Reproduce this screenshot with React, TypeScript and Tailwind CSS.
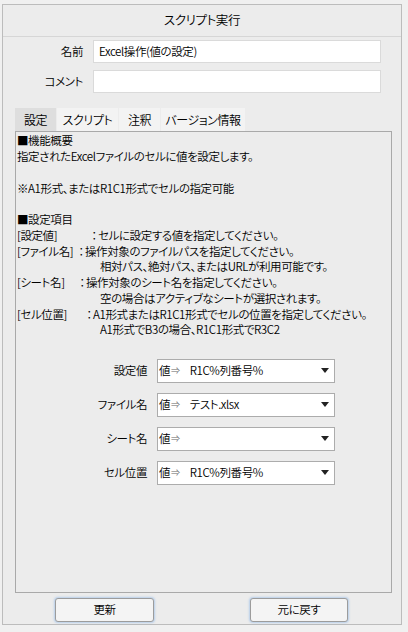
import { ReactNode } from "react";

const FONT = "font-['Noto_Sans_CJK_JP',sans-serif] [font-feature-settings:'palt'] font-[350]";

const TABS = [
  { label: "設定", width: "w-[41px]", active: true },
  { label: "スクリプト", width: "w-[61px]", active: false },
  { label: "注釈", width: "w-[41px]", active: false },
  { label: "バージョン情報", width: "w-[84px]", active: false },
];

const FIELDS = [
  { label: "設定値", value: "R1C%列番号%" },
  { label: "ファイル名", value: "テスト.xlsx" },
  { label: "シート名", value: "" },
  { label: "セル位置", value: "R1C%列番号%" },
];

function Line({ children }: { children?: ReactNode }) {
  return <div className="h-[15.75px] whitespace-pre flex items-center">{children}</div>;
}

// label + colon + description, label column width varies like the original
function Item({ label, labelW, text }: { label: string; labelW: string; text: string }) {
  return (
    <Line>
      <span className={`${labelW} shrink-0`}>{label}</span>
      <span className="w-[8px] shrink-0 text-center">：</span>
      <span>{text}</span>
    </Line>
  );
}

function Cont({ text }: { text: string }) {
  return (
    <Line>
      <span className="ml-[83px]">{text}</span>
    </Line>
  );
}

function Dropdown({ value }: { value: string }) {
  return (
    <div className="flex items-center w-[178px] h-[24px] border border-[#acacac] bg-white">
      <span className="ml-[1px]">値</span>
      <span className="text-[9px] text-[#666] ml-[1px]">⇒</span>
      <span className="ml-[10px] flex-1">{value}</span>
      <svg width="8" height="5" viewBox="0 0 8 5" className="mr-[5px]">
        <path d="M0 0H8L4 5Z" fill="#222" />
      </svg>
    </div>
  );
}

function PushButton({ label, width }: { label: string; width: string }) {
  return (
    <button
      className={`${width} h-[24px] rounded-[3px] border border-[#9c9c9c] bg-[#f4f4f4] shadow-[0_0_2px_1px_rgba(120,170,230,0.45)]`}
    >
      {label}
    </button>
  );
}

export default function App() {
  return (
    <div
      className={`w-[408px] h-[632px] bg-[#f0f0f0] pt-[4px] pl-[2px] text-[11.5px] tracking-[-0.4px] text-black ${FONT}`}
    >
      <div className="w-[400px] h-[621px] border border-[#bcbcbc] bg-[#ececec] flex flex-col">
        {/* Title */}
        <div className="h-[32px] border-b border-[#d6d6d6] flex items-center justify-center text-[12.5px]">
          スクリプト実行
        </div>

        {/* Name / comment */}
        <div className="mt-[3px] flex flex-col gap-[7px]">
          <div className="flex items-center">
            <span className="w-[80px] text-right">名前</span>
            <div className="ml-[10px] w-[288px] h-[23px] bg-white border border-[#dadada] flex items-center pl-[5px]">
              Excel操作(値の設定)
            </div>
          </div>
          <div className="flex items-center">
            <span className="w-[80px] text-right">コメント</span>
            <div className="ml-[10px] w-[288px] h-[23px] bg-white border border-[#dadada]" />
          </div>
        </div>

        {/* Tabs */}
        <div className="mt-[15px] ml-[12px] flex gap-[1px] h-[23px] text-[12px]">
          {TABS.map((t) => (
            <div
              key={t.label}
              className={`${t.width} flex items-center justify-center ${t.active ? "bg-[#dedede]" : "bg-[#f3f3f3]"}`}
            >
              {t.label}
            </div>
          ))}
        </div>

        {/* Tab content */}
        <div className="ml-[12px] w-[377px] h-[462px] border border-[#a9a9a9] pl-[1px] pt-[1px] flex flex-col">
          <Line>■機能概要</Line>
          <Line>指定されたExcelファイルのセルに値を設定します。</Line>
          <Line />
          <Line>※A1形式、またはR1C1形式でセルの指定可能</Line>
          <Line />
          <Line>■設定項目</Line>
          <Item label="[設定値]" labelW="w-[73px]" text="セルに設定する値を指定してください。" />
          <Item label="[ファイル名]" labelW="w-[60px]" text="操作対象のファイルパスを指定してください。" />
          <Cont text="相対パス、絶対パス、またはURLが利用可能です。" />
          <Item label="[シート名]" labelW="w-[61px]" text="操作対象のシート名を指定してください。" />
          <Cont text="空の場合はアクティブなシートが選択されます。" />
          <Item label="[セル位置]" labelW="w-[68px]" text="A1形式またはR1C1形式でセルの位置を指定してください。" />
          <Cont text="A1形式でB3の場合、R1C1形式でR3C2" />

          <div className="mt-[21px] flex flex-col gap-[10px]">
            {FIELDS.map((f) => (
              <div key={f.label} className="flex items-center">
                <span className="w-[130px] text-right">{f.label}</span>
                <div className="ml-[10px]">
                  <Dropdown value={f.value} />
                </div>
              </div>
            ))}
          </div>
        </div>

        {/* Buttons */}
        <div className="mt-[5px] ml-[52px] flex gap-[96px]">
          <PushButton label="更新" width="w-[99px]" />
          <PushButton label="元に戻す" width="w-[98px]" />
        </div>
      </div>
    </div>
  );
}
